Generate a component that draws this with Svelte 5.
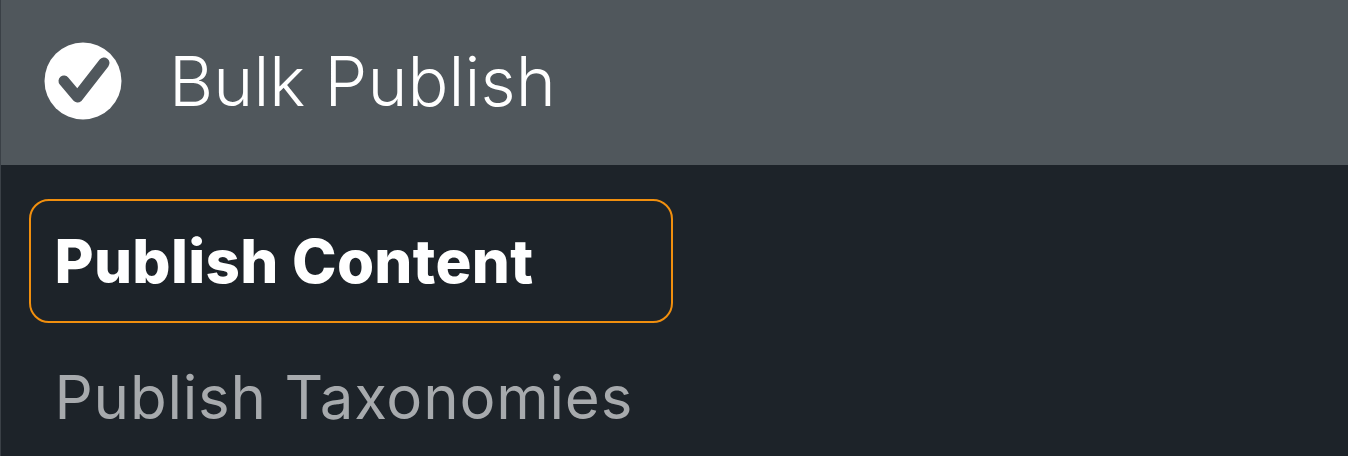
<script lang="ts">
  const items = [
    { label: "Publish Content", active: true },
    { label: "Publish Taxonomies", active: false },
  ];
</script>

<div class="menu">
  <header class="head">
    <svg class="check" width="78" height="78" viewBox="0 0 78 78" aria-hidden="true">
      <circle cx="39" cy="39" r="38.5" fill="#fff" />
      <path d="M20 39 L33.5 55 L60 21" fill="none" stroke="#50575c" stroke-width="11" stroke-linejoin="round" stroke-linecap="round" />
    </svg>
    <span class="title">Bulk Publish</span>
  </header>
  <nav class="items">
    {#each items as item}
      <a class="item" class:active={item.active} href="#top">{item.label}</a>
    {/each}
  </nav>
</div>

<style>
  :global(body) {
    margin: 0;
    background: #1d2329;
  }

  .menu {
    width: 1348px;
    height: 456px;
    box-sizing: border-box;
    overflow: hidden;
    border-left: 1px solid #3a4046;
    font-family: Inter, "Open Sans", sans-serif;
  }

  .head {
    height: 165px;
    box-sizing: border-box;
    display: flex;
    align-items: center;
    gap: 47px;
    padding: 0 0 4px 43px;
    background: #50575c;
    color: #fff;
  }

  .title {
    font-size: 68px;
    font-weight: 300;
    line-height: 78px;
    letter-spacing: 0.1px;
  }

  .items {
    display: flex;
    flex-direction: column;
    gap: 12px;
    padding: 34px 0 0 28px;
  }

  .item {
    width: 644px;
    height: 124px;
    box-sizing: border-box;
    display: flex;
    align-items: center;
    padding-left: 23.5px;
    border: 2.5px solid transparent;
    border-radius: 20px;
    font-size: 60px;
    font-weight: 400;
    letter-spacing: 0.8px;
    color: #a7aaad;
    text-decoration: none;
  }

  .item.active {
    border-color: #f18f0e;
    color: #fff;
    font-weight: 800;
    letter-spacing: 0.3px;
  }
</style>
